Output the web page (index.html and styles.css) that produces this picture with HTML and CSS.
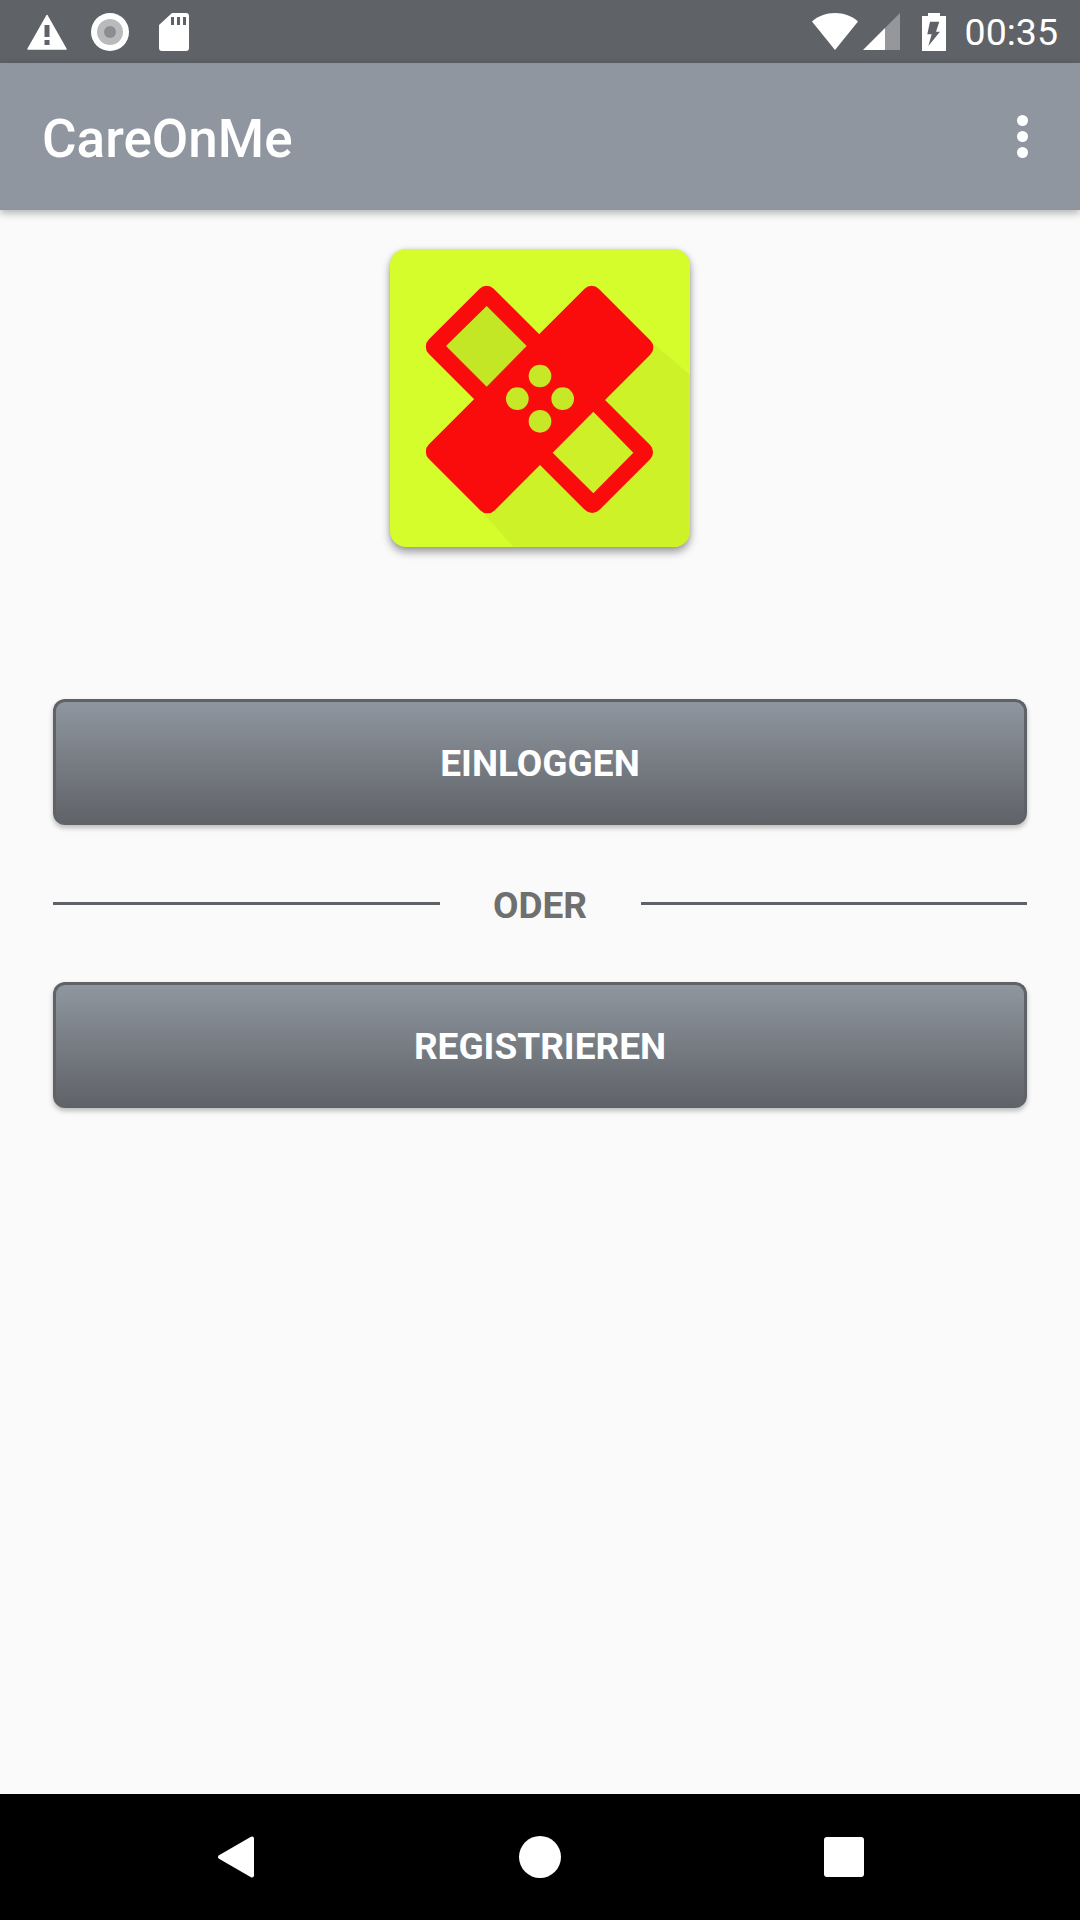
FILE: index.html
```html
<!DOCTYPE html>
<html lang="de">
<head>
<meta charset="utf-8">
<title>CareOnMe</title>
<link rel="stylesheet" href="styles.css">
</head>
<body>
<div class="screen">
  <header class="status">
    <div class="status-left">
      <svg class="ic-warn" viewBox="0 0 40 36"><path fill="#fff" stroke="#fff" stroke-width="1.5" stroke-linejoin="round" d="M20 1.500 39 35H1Z"/><path fill="#5f6267" d="M17.500 11h5v12h-5ZM17.500 26h5v5h-5Z"/></svg>
      <svg class="ic-rec" viewBox="0 0 38 38"><circle cx="19" cy="19" r="19" fill="#fff"/><circle cx="19" cy="19" r="13" fill="#b9babc"/><circle cx="19" cy="19" r="6" fill="#8b8d90"/></svg>
      <svg class="ic-sd" viewBox="0 0 30 38"><path fill="#fff" fill-rule="evenodd" d="M13 0h14a3 3 0 0 1 3 3v32a3 3 0 0 1-3 3H3a3 3 0 0 1-3-3V12ZM12 4v8h3V4ZM18 4v8h3V4ZM24 4v8h3V4Z"/></svg>
    </div>
    <div class="status-right">
      <svg class="ic-wifi" viewBox="0 0 46 37"><path fill="#fff" d="M0 8.500C6 3 14 0 23 0s17 3 23 8.500L23 37Z"/></svg>
      <svg class="ic-signal" viewBox="0 0 37 37"><path fill="#96979a" d="M37 0v37H22V15Z"/><path fill="#fff" d="M22 15v22H0Z"/></svg>
      <svg class="ic-batt" viewBox="0 0 24 38"><path fill="#fff" fill-rule="evenodd" d="M6 0h12v3h6v35H0V3h6ZM8 8.700h9.300L14 18.700h4L6.300 33l3.400-11.700H5.300Z"/></svg>
      <span class="clock">00:35</span>
    </div>
  </header>

  <div class="appbar">
    <span class="app-title">CareOnMe</span>
    <div class="overflow"><i class="dot"></i><i class="dot"></i><i class="dot"></i></div>
  </div>

  <main class="content">
    <div class="logo">
      <svg class="logo-art" viewBox="60 57 900 894">
        <path class="logo-shade" d="M850 340 960 435V910a40 40 0 0 1-40 41H430L340 850Z"/>
        <g class="logo-cross">
          <path d="M350 197.400 819.100 666.500 666.500 819.100 197.400 350Z"/>
          <path d="M665 197.400 820.100 352.500 352.500 820.100 197.400 665Z"/>
        </g>
        <path class="pad-a" d="M350 228 470 348 350 470 228 348Z"/>
        <path class="pad-b" d="M670 545 790 668 670 790 548 668Z"/>
        <circle class="hole" cx="510" cy="438" r="34"/>
        <circle class="hole" cx="442" cy="506" r="34"/>
        <circle class="hole" cx="578" cy="506" r="34"/>
        <circle class="hole" cx="510" cy="574" r="34"/>
      </svg>
    </div>

    <button class="btn btn-first">EINLOGGEN</button>
    <div class="divider"><span class="rule"></span><span class="divider-text">ODER</span><span class="rule"></span></div>
    <button class="btn">REGISTRIEREN</button>
  </main>

  <nav class="navbar">
    <svg class="nav-ic" viewBox="0 0 44 44"><path fill="#fff" stroke="#fff" stroke-width="4" stroke-linejoin="round" d="M6 22 38 3.500V40.500Z"/></svg>
    <svg class="nav-ic" viewBox="0 0 44 44"><circle cx="22" cy="22" r="21" fill="#fff"/></svg>
    <svg class="nav-ic" viewBox="0 0 44 44"><rect x="2" y="2" width="40" height="40" rx="3" fill="#fff"/></svg>
  </nav>
</div>
</body>
</html>
```

FILE: styles.css
```css
* { box-sizing: border-box; }

html, body {
  margin: 0;
  padding: 0;
  background: #fafafa;
}

.screen {
  width: 1080px;
  height: 1920px;
  display: flex;
  flex-direction: column;
  overflow: hidden;
  font-family: Roboto, "Liberation Sans", sans-serif;
}

/* Status bar */
.status {
  height: 63px;
  flex: none;
  background: #5f6267;
  display: flex;
  align-items: center;
  justify-content: space-between;
  padding: 0 22px 0 27px;
}

.status-left, .status-right {
  display: flex;
  align-items: center;
}

.ic-warn { width: 40px; height: 36px; margin-right: 24px; }
.ic-rec { width: 38px; height: 38px; margin-right: 30px; }
.ic-sd { width: 30px; height: 38px; }
.ic-wifi { width: 46px; height: 37px; margin-right: 5px; }
.ic-signal { width: 37px; height: 37px; margin-right: 22px; }
.ic-batt { width: 24px; height: 38px; margin-right: 19px; }

.clock {
  font-size: 37.5px;
  line-height: 42px;
  color: #fff;
}

/* App bar */
.appbar {
  height: 147px;
  flex: none;
  background: #8f969f;
  display: flex;
  align-items: center;
  justify-content: space-between;
  padding: 0 52px 0 42px;
  box-shadow: 0 3px 8px rgba(0, 0, 0, 0.3);
  position: relative;
  z-index: 1;
}

.app-title {
  font-size: 53px;
  font-weight: 500;
  color: #fff;
  padding-top: 4px;
}

.overflow {
  display: flex;
  flex-direction: column;
  gap: 5px;
}

.dot {
  display: block;
  width: 11px;
  height: 11px;
  border-radius: 50%;
  background: #fff;
}

/* Content */
.content {
  flex: 1;
  padding: 39px 53px 0;
  display: flex;
  flex-direction: column;
  align-items: stretch;
  background: #fafafa;
}

.logo {
  width: 300px;
  height: 298px;
  align-self: center;
  border-radius: 16px;
  background: #d4fd2b;
  box-shadow: 0 5px 8px rgba(0, 0, 0, 0.38), 0 0 4px rgba(0, 0, 0, 0.1);
  overflow: hidden;
}

.logo-art { display: block; width: 300px; height: 298px; }
.logo-shade { fill: #cef228; }
.logo-cross path {
  fill: #fb0c0c;
  stroke: #fb0c0c;
  stroke-width: 60;
  stroke-linejoin: round;
}
.pad-a { fill: #c3e625; }
.pad-b { fill: #cdf028; }
.hole { fill: #c6e826; }

.btn {
  display: block;
  width: 100%;
  height: 126px;
  padding: 0;
  border: 3px solid #5f6267;
  border-bottom-width: 0;
  border-radius: 12px;
  background: linear-gradient(180deg, #8f969f 0%, #5f6267 100%);
  box-shadow: 0 3px 5px rgba(0, 0, 0, 0.25);
  color: #fff;
  font-family: inherit;
  font-size: 37px;
  font-weight: 700;
}

.btn-first { margin-top: 152px; }

.divider {
  height: 43px;
  margin: 57px 0;
  display: flex;
  align-items: center;
}

.rule {
  flex: 1;
  height: 3px;
  background: #5f6267;
}

.divider-text {
  width: 201px;
  text-align: center;
  color: #6f6f6f;
  font-size: 37px;
  font-weight: 700;
  line-height: 43px;
  padding-top: 4px;
}

/* Navigation bar */
.navbar {
  height: 126px;
  flex: none;
  background: #000;
  display: flex;
  align-items: center;
  justify-content: center;
  gap: 260px;
}

.nav-ic { width: 44px; height: 44px; }
```
